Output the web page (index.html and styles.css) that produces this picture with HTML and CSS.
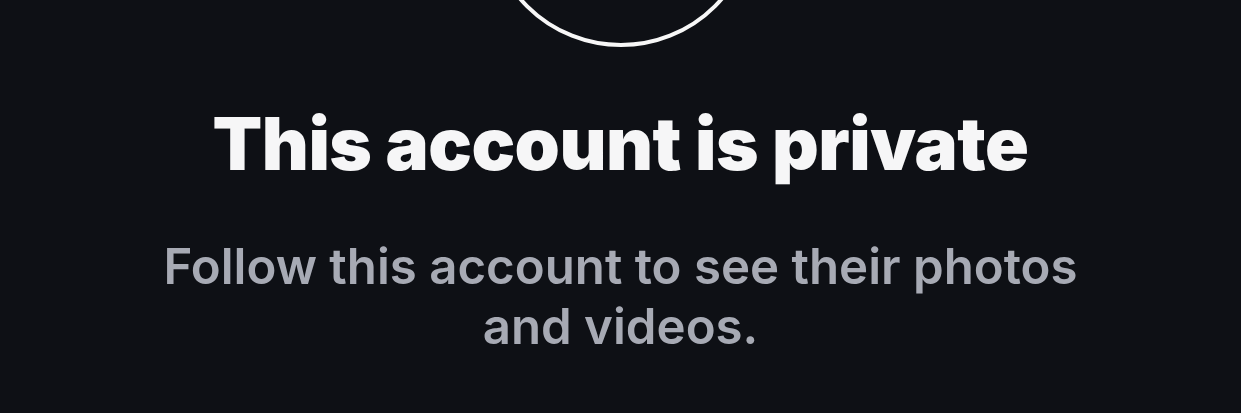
FILE: index.html
```html
<!DOCTYPE html>
<html lang="en">
<head>
<meta charset="utf-8">
<title>This account is private</title>
<link rel="stylesheet" href="styles.css">
</head>
<body>
<main class="private">
  <div class="avatar-ring"></div>
  <h1 class="title">This account is private</h1>
  <p class="subtitle">Follow this account to see their photos and videos.</p>
</main>
</body>
</html>
```

FILE: styles.css
```css
html, body {
  margin: 0;
  padding: 0;
  background: #0e1015;
  height: 100%;
  overflow: hidden;
}
.private {
  display: flex;
  flex-direction: column;
  align-items: center;
  font-family: Inter, "Noto Sans", sans-serif;
}
.avatar-ring {
  width: 270px;
  height: 270px;
  border: 4px solid #f7f7f7;
  border-radius: 50%;
  box-sizing: border-box;
  margin-top: -223px;
  flex-shrink: 0;
}
.title {
  margin: 53px 0 0;
  color: #f6f6f7;
  font-size: 72.5px;
  font-weight: 900;
  line-height: 88px;
  letter-spacing: -0.5px;
}
.subtitle {
  margin: 48px 0 0;
  width: 960px;
  text-align: center;
  color: #a7aab4;
  font-size: 49.2px;
  font-weight: 600;
  line-height: 60px;
}
```
